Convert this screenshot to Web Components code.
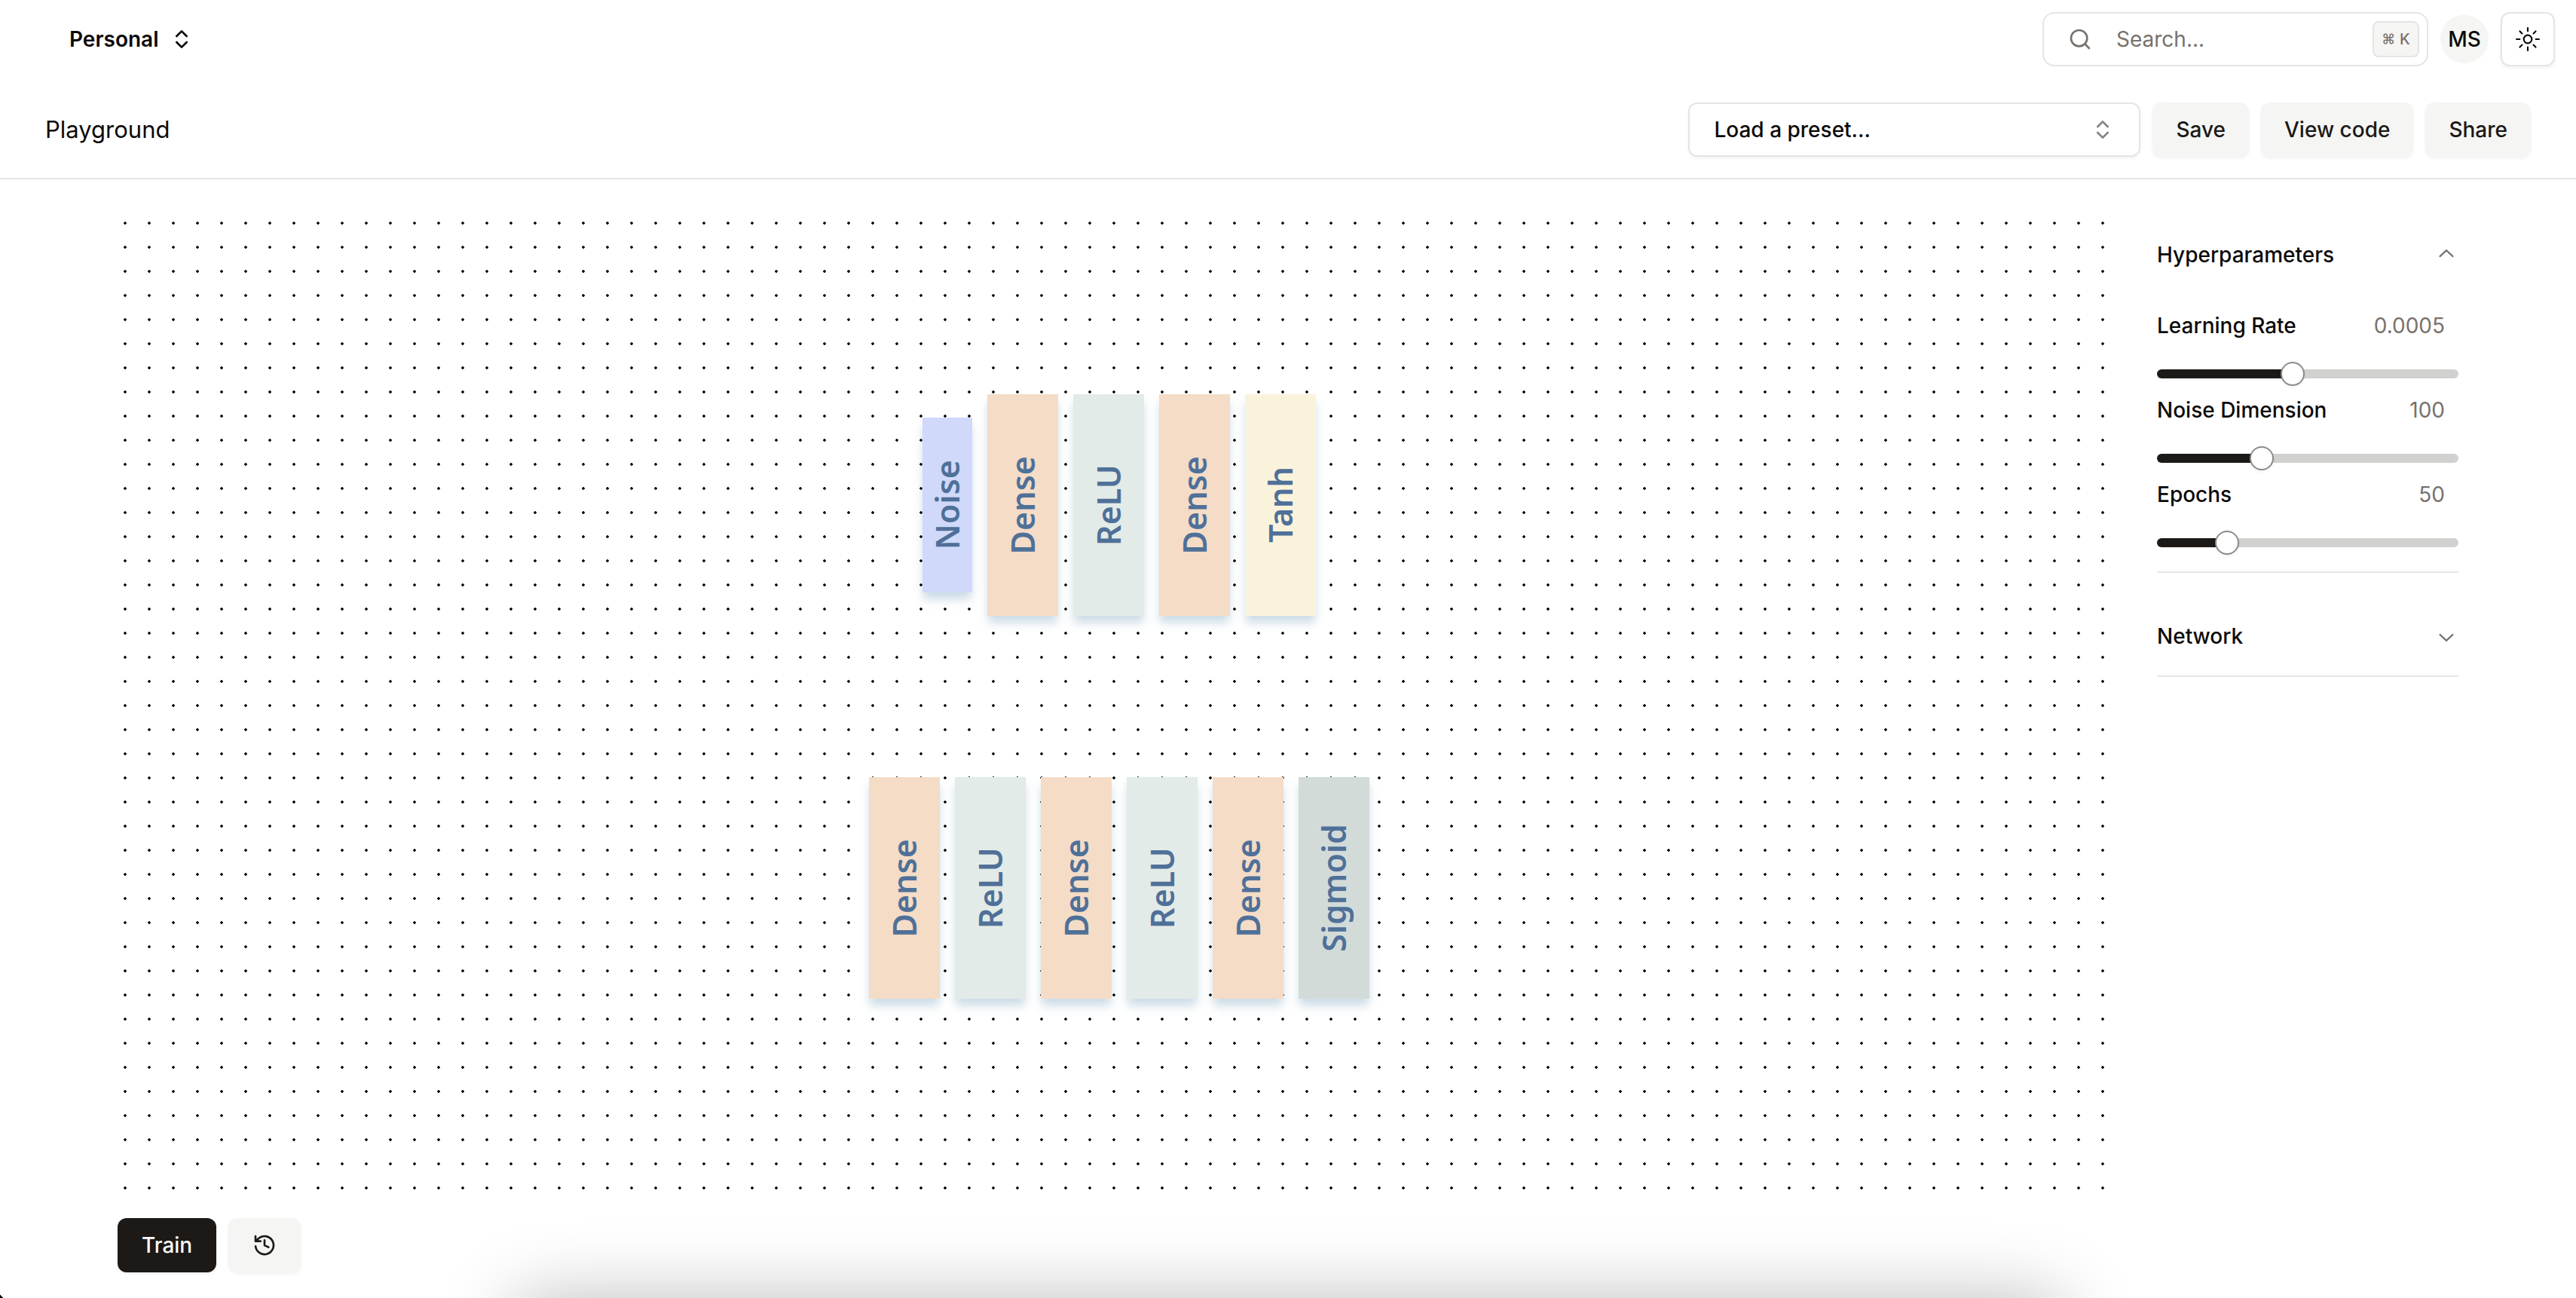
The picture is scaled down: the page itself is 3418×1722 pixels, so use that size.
<!DOCTYPE html>
<html lang="en">
<head>
<meta charset="utf-8">
<title>Playground</title>
<style>
  body { margin: 0; background: #fff; color: #0c0a09; font-family: Inter, "Liberation Sans", sans-serif; font-size: 28px; line-height: 40px;
    --border: #e5e5e4; --muted: #78716c; --secondary: #f5f5f4; --primary: #1c1917; --shadow: 0 2px 4px rgba(0,0,0,.06); }
</style>
</head>
<body>
<play-app></play-app>
<script>
const ICONS = {
  sort: ['24', '<path d="m7 15 5 5 5-5M7 9l5-5 5 5" stroke-width="2"/>'],
  search: ['24', '<circle cx="11" cy="11" r="8" stroke-width="2"/><path d="m21 21-4.3-4.3" stroke-width="2"/>'],
  history: ['24', '<path d="M3 3v5h5M3.05 13A9 9 0 1 0 6 5.3L3 8M12 7v5l4 2" stroke-width="2"/>'],
  sun: ['15', '<circle cx="7.5" cy="7.5" r="2.5"/><path d="M7.5.5v2M7.5 12.5v2M.5 7.5h2M12.5 7.5h2M2.55 2.55l1.41 1.41M11.04 11.04l1.41 1.41M2.55 12.45l1.41-1.41M11.04 3.96l1.41-1.41"/>'],
  down: ['15', '<path d="M3.5 6.5l4 3.75 4-3.75"/>'],
  up: ['15', '<path d="M3.5 8.5l4-3.75 4 3.75"/>'],
};

function define(name, render) {
  customElements.define(name, class extends HTMLElement {
    constructor() {
      super();
      this.attachShadow({ mode: 'open' });
    }
    connectedCallback() {
      const t = document.createElement('template');
      t.innerHTML = render(this);
      this.shadowRoot.replaceChildren(t.content.cloneNode(true));
    }
  });
}

define('ui-icon', el => {
  const [size, body] = ICONS[el.getAttribute('name')];
  return `
  <style>
    :host { display: block; flex: none; width: 32px; height: 32px; }
    svg { display: block; width: 100%; height: 100%; fill: none; stroke: currentColor; stroke-width: 1; stroke-linecap: round; stroke-linejoin: round; }
  </style>
  <svg viewBox="0 0 ${size} ${size}" aria-hidden="true">${body}</svg>`;
});

define('ui-button', el => `
  <style>
    :host { display: block; flex: none; }
    button { display: flex; align-items: center; justify-content: center; box-sizing: border-box; height: 72px; padding: 0 31px; border: 0; border-radius: 12px;
      background: var(--secondary); color: var(--primary); font: inherit; font-weight: 500; box-shadow: var(--shadow); }
    :host([variant=primary]) button { padding: 0 32px; background: var(--primary); color: #fafaf9; }
    :host([variant=icon]) button { padding: 0 32px; }
    :host([variant=outline]) button { padding: 0 18px; border: 2px solid var(--border); background: #fff; color: #0c0a09; }
  </style>
  <button type="button" aria-label="${el.getAttribute('label') || el.textContent.trim()}"><slot></slot></button>`);

define('team-switcher', () => `
  <style>
    :host { display: block; }
    button { display: flex; align-items: center; gap: 14px; padding: 0; border: 0; background: none; color: inherit; font: inherit; font-weight: 600; }
  </style>
  <button type="button"><slot></slot><ui-icon name="sort"></ui-icon></button>`);

define('search-box', () => `
  <style>
    :host { display: block; flex: none; width: 512px; }
    label { display: flex; align-items: center; box-sizing: border-box; height: 72px; padding: 0 10px 0 32px; border: 2px solid var(--border); border-radius: 16px; color: var(--muted); }
    input { flex: 1; min-width: 0; margin: 0 0 0 32px; padding: 0; border: 0; outline: 0; background: none; font: inherit; color: inherit; }
    input::placeholder { color: var(--muted); opacity: 1; }
    kbd { display: flex; align-items: center; justify-content: center; gap: 6px; box-sizing: border-box; width: 62px; height: 48px; border: 2px solid var(--border); border-radius: 8px; background: var(--secondary); font: 500 20px/40px Inter, "Liberation Sans", sans-serif; }
    kbd span:first-child { font-size: 18px; }
  </style>
  <label><ui-icon name="search"></ui-icon><input type="text" placeholder="Search..." aria-label="Search"><kbd><span>⌘</span><span>K</span></kbd></label>`);

define('user-avatar', () => `
  <style>
    :host { display: flex; flex: none; align-items: center; justify-content: center; width: 64px; height: 64px; border-radius: 50%; background: var(--secondary); font-weight: 500; }
  </style><slot></slot>`);

define('top-bar', () => `
  <style>
    :host { display: block; }
    header { display: flex; align-items: center; justify-content: space-between; padding: 16px 28px 16px 92px; }
    div { display: flex; align-items: center; gap: 16px; }
  </style>
  <header>
    <team-switcher>Personal</team-switcher>
    <div><search-box></search-box><user-avatar>MS</user-avatar><ui-button variant="outline" label="Toggle theme"><ui-icon name="sun"></ui-icon></ui-button></div>
  </header>`);

define('preset-picker', () => `
  <style>
    :host { display: block; flex: none; width: 600px; }
    div { display: grid; align-items: center; }
    select, ui-icon { grid-area: 1 / 1; }
    select { appearance: none; box-sizing: border-box; width: 100%; height: 72px; margin: 0; padding: 0 32px; border: 2px solid var(--border); border-radius: 12px; background: #fff; box-shadow: var(--shadow); color: inherit; font: inherit; font-weight: 500; }
    ui-icon { justify-self: end; margin-right: 34px; opacity: .5; pointer-events: none; }
  </style>
  <div><select aria-label="Load a preset"><option>Load a preset...</option></select><ui-icon name="sort"></ui-icon></div>`);

define('page-bar', () => `
  <style>
    :host { display: block; border-bottom: 2px solid var(--border); }
    section { display: flex; align-items: center; justify-content: space-between; padding: 32px 60px 28px; }
    h2 { margin: 0; font-size: 31px; font-weight: 400; line-height: 40px; }
    div { display: flex; gap: 16px; }
  </style>
  <section>
    <h2>Playground</h2>
    <div><preset-picker></preset-picker><ui-button>Save</ui-button><ui-button>View code</ui-button><ui-button>Share</ui-button></div>
  </section>`);

define('net-layer', () => `
  <style>
    :host { display: flex; align-items: center; justify-content: center; width: 94px; height: 294px; background: #f4dcc7; color: #4f7098;
      box-shadow: 0 10px 12px -1px rgba(70,125,160,.28);
      font: 600 43px/60px "Noto Sans", "Open Sans", sans-serif; }
    :host([kind=relu]) { background: #e2ebe7; }
    :host([kind=tanh]) { background: #faf3dc; }
    :host([kind=sigmoid]) { background: #d2dbd8; }
    :host([kind=noise]) { width: 66px; height: 232px; background: #d0d9fa; }
    span { writing-mode: vertical-rl; transform: rotate(180deg); }
  </style>
  <span><slot></slot></span>`);

define('net-canvas', () => `
  <style>
    :host { display: flex; flex: 1; flex-direction: column; justify-content: center; gap: 214px;
      background: radial-gradient(circle closest-side, #000 9%, transparent 13%) -6px 10px / 32px 32px; }
    div { display: flex; align-items: center; justify-content: center; gap: 20px; }
  </style>
  <div><net-layer kind="noise">Noise</net-layer><net-layer>Dense</net-layer><net-layer kind="relu">ReLU</net-layer><net-layer>Dense</net-layer><net-layer kind="tanh">Tanh</net-layer></div>
  <div><net-layer>Dense</net-layer><net-layer kind="relu">ReLU</net-layer><net-layer>Dense</net-layer><net-layer kind="relu">ReLU</net-layer><net-layer>Dense</net-layer><net-layer kind="sigmoid">Sigmoid</net-layer></div>`);

define('param-slider', el => {
  const min = +el.getAttribute('min'), max = +el.getAttribute('max'), value = +el.getAttribute('value');
  return `
  <style>
    :host { display: block; --at: ${(value - min) / (max - min)}; }
    p { display: flex; justify-content: space-between; margin: 0; padding: 0 18px 0 0; }
    label { font-weight: 500; }
    output { color: var(--muted); }
    input { appearance: none; display: block; width: 100%; height: 32px; margin: 28px 0 12px; background: none; }
    input::-webkit-slider-runnable-track { height: 12px; border-radius: 6px;
      background: linear-gradient(var(--primary), var(--primary)) 0 0 / calc(16px + var(--at) * (100% - 32px)) 100% no-repeat #d1d1d0; }
    input::-webkit-slider-thumb { appearance: none; box-sizing: border-box; width: 32px; height: 32px; margin-top: -10px; border: 2px solid #8d8b8a; border-radius: 50%; background: #fff; box-shadow: var(--shadow); }
  </style>
  <p><label for="r">${el.getAttribute('label')}</label><output for="r">${el.getAttribute('value')}</output></p>
  <input id="r" type="range" min="${min}" max="${max}" step="any" value="${value}">`;
});

define('accordion-item', el => `
  <style>
    :host { display: block; border-bottom: 2px solid var(--border); }
    h3 { margin: 0; font: inherit; }
    button { display: flex; align-items: center; justify-content: space-between; width: 100%; padding: 32px 0; border: 0; background: none; color: inherit; font: inherit; font-weight: 500; text-align: left; }
    ui-icon { color: var(--muted); }
    div { padding: 22px 0 10px; }
  </style>
  <h3><button type="button" aria-expanded="${el.hasAttribute('open')}">${el.getAttribute('heading')}<ui-icon name="${el.hasAttribute('open') ? 'up' : 'down'}"></ui-icon></button></h3>
  ${el.hasAttribute('open') ? '<div><slot></slot></div>' : ''}`);

define('side-panel', () => `
  <style>
    :host { display: flex; flex: none; flex-direction: column; gap: 32px; width: 400px; padding-top: 16px; }
  </style>
  <accordion-item heading="Hyperparameters" open>
    <param-slider label="Learning Rate" min="0.0001" max="0.001" value="0.0005"></param-slider>
    <param-slider label="Noise Dimension" min="0" max="300" value="100"></param-slider>
    <param-slider label="Epochs" min="10" max="200" value="50"></param-slider>
  </accordion-item>
  <accordion-item heading="Network"></accordion-item>`);

define('play-app', () => `
  <style>
    :host { display: flex; flex-direction: column; min-height: 100vh; }
    main { display: flex; flex: 1; gap: 48px; padding: 32px 156px 34px; }
    .work { display: flex; flex: 1; flex-direction: column; gap: 38px; }
    .actions { display: flex; gap: 16px; }
    .dock { position: fixed; left: 20%; right: 20%; top: 100%; height: 200px; margin-top: 4px; box-shadow: 0 0 100px rgba(0,0,0,.28); pointer-events: none; }
    .corner { position: fixed; left: 0; bottom: 0; width: 4px; height: 4px; background: linear-gradient(45deg, #000 50%, transparent 60%); pointer-events: none; }
  </style>
  <top-bar></top-bar>
  <page-bar></page-bar>
  <main>
    <div class="work">
      <net-canvas></net-canvas>
      <div class="actions"><ui-button variant="primary">Train</ui-button><ui-button variant="icon" label="Show history"><ui-icon name="history"></ui-icon></ui-button></div>
    </div>
    <side-panel></side-panel>
  </main>
  <div class="dock"></div>
  <div class="corner"></div>`);
</script>
</body>
</html>
